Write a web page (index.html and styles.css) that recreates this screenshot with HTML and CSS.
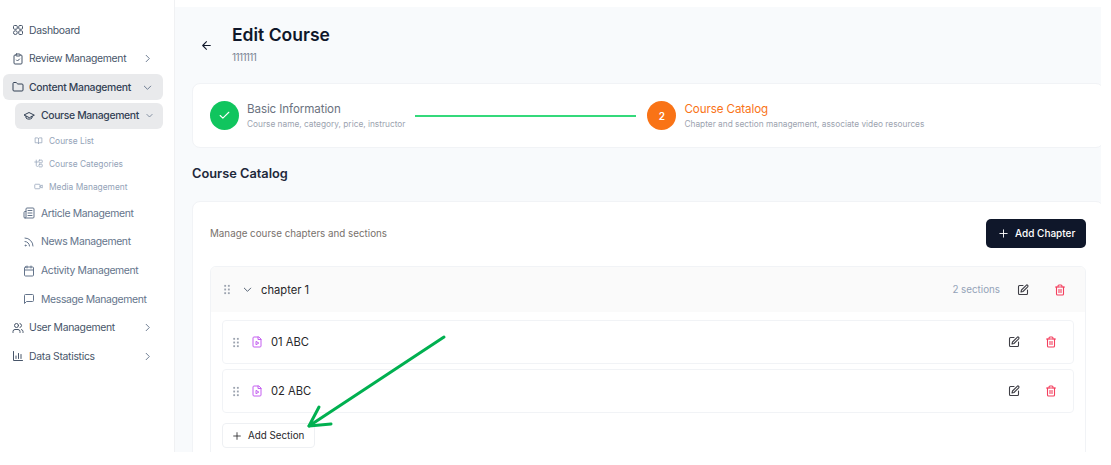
FILE: index.html
```html
<!DOCTYPE html>
<html lang="en">
<head>
<meta charset="utf-8">
<title>Edit Course</title>
<link rel="stylesheet" href="styles.css">
</head>
<body>
<svg width="0" height="0" class="defs">
  <symbol id="grip" viewBox="0 0 8 12"><g fill="currentColor"><rect x="1" y="1" width="2" height="2"/><rect x="5" y="1" width="2" height="2"/><rect x="1" y="5" width="2" height="2"/><rect x="5" y="5" width="2" height="2"/><rect x="1" y="9" width="2" height="2"/><rect x="5" y="9" width="2" height="2"/></g></symbol>
  <symbol id="edit" viewBox="0 0 24 24"><g fill="none" stroke="currentColor" stroke-width="2.2" stroke-linecap="round" stroke-linejoin="round"><path d="M12 3H5a2 2 0 0 0-2 2v14a2 2 0 0 0 2 2h14a2 2 0 0 0 2-2v-7"/><path d="M18.4 2.600a2.100 2.100 0 1 1 3 3L12 15l-4 1 1-4z"/></g></symbol>
  <symbol id="trash" viewBox="0 0 24 24"><g fill="none" stroke="currentColor" stroke-width="2.2" stroke-linecap="round" stroke-linejoin="round"><path d="M3 6h18"/><path d="M19 6v14a2 2 0 0 1-2 2H7a2 2 0 0 1-2-2V6"/><path d="M8 6V4a2 2 0 0 1 2-2h4a2 2 0 0 1 2 2v2"/><path d="M10 11v6"/><path d="M14 11v6"/></g></symbol>
  <symbol id="file" viewBox="0 0 24 24"><g fill="none" stroke="currentColor" stroke-width="2" stroke-linecap="round" stroke-linejoin="round"><path d="M15 2H6a2 2 0 0 0-2 2v16a2 2 0 0 0 2 2h12a2 2 0 0 0 2-2V7z"/><path d="M14 2v5h6"/><path d="M10 11.500v6l5-3z"/></g></symbol>
  <symbol id="right" viewBox="0 0 24 24"><path d="m9 5 7 7-7 7" fill="none" stroke="currentColor" stroke-width="2" stroke-linecap="round" stroke-linejoin="round"/></symbol>
  <symbol id="down" viewBox="0 0 24 24"><path d="m5 9 7 7 7-7" fill="none" stroke="currentColor" stroke-width="2" stroke-linecap="round" stroke-linejoin="round"/></symbol>
  <symbol id="plus" viewBox="0 0 24 24"><path d="M12 4v16M4 12h16" fill="none" stroke="currentColor" stroke-width="2" stroke-linecap="round"/></symbol>
</svg>
<div class="page">
  <aside class="sidebar">
    <div class="nav-item top">
      <svg class="ico" viewBox="0 0 24 24"><g fill="none" stroke="currentColor" stroke-width="2"><rect x="3" y="3" width="7.500" height="7.500" rx="2"/><rect x="13.500" y="3" width="7.500" height="7.500" rx="2"/><rect x="3" y="13.500" width="7.500" height="7.500" rx="3.700"/><rect x="13.500" y="13.500" width="7.500" height="7.500" rx="2"/></g></svg>
      <span class="label">Dashboard</span>
    </div>
    <div class="nav-item top">
      <svg class="ico" viewBox="0 0 24 24"><g fill="none" stroke="currentColor" stroke-width="2" stroke-linecap="round" stroke-linejoin="round"><rect x="8" y="2" width="8" height="4" rx="1"/><path d="M16 4h2a2 2 0 0 1 2 2v14a2 2 0 0 1-2 2H6a2 2 0 0 1-2-2V6a2 2 0 0 1 2-2h2"/><path d="m9 14 2 2 4-4"/></g></svg>
      <span class="label">Review Management</span>
      <svg class="chev"><use href="#right"/></svg>
    </div>
    <div class="nav-item top active">
      <svg class="ico" viewBox="0 0 24 24"><path d="M20 20a2 2 0 0 0 2-2V8a2 2 0 0 0-2-2h-7.900a2 2 0 0 1-1.700-.9l-.8-1.200A2 2 0 0 0 7.900 3H4a2 2 0 0 0-2 2v13a2 2 0 0 0 2 2z" fill="none" stroke="currentColor" stroke-width="2" stroke-linejoin="round"/></svg>
      <span class="label">Content Management</span>
      <svg class="chev"><use href="#down"/></svg>
    </div>
    <div class="nav-item sub active">
      <svg class="ico" viewBox="0 0 24 24"><g fill="none" stroke="currentColor" stroke-width="2" stroke-linecap="round" stroke-linejoin="round"><path d="M22 10 12 5 2 10l10 5z"/><path d="M6 12.500V16c3 3 9 3 12 0v-3.500"/></g></svg>
      <span class="label">Course Management</span>
      <svg class="chev small"><use href="#down"/></svg>
    </div>
    <div class="leaf">
      <svg class="leaf-ico" viewBox="0 0 24 24"><g fill="none" stroke="currentColor" stroke-width="2" stroke-linejoin="round"><path d="M12 6.500V21"/><path d="M3 5h6a3 3 0 0 1 3 2 3 3 0 0 1 3-2h6v13h-7a2 2 0 0 0-2 3 2 2 0 0 0-2-3H3z"/></g></svg>
      <span>Course List</span>
    </div>
    <div class="leaf">
      <svg class="leaf-ico" viewBox="0 0 24 24"><g fill="none" stroke="currentColor" stroke-width="2" stroke-linecap="round" stroke-linejoin="round"><path d="M2 8h8M6 3v14a3 3 0 0 0 3 3"/><rect x="13" y="3" width="9" height="7" rx="1.500"/><rect x="13" y="14" width="9" height="7" rx="1.500"/></g></svg>
      <span>Course Categories</span>
    </div>
    <div class="leaf">
      <svg class="leaf-ico" viewBox="0 0 24 24"><g fill="none" stroke="currentColor" stroke-width="2" stroke-linejoin="round"><rect x="2" y="6" width="14" height="12" rx="2"/><path d="m16 11 6-3v8l-6-3z"/></g></svg>
      <span>Media Management</span>
    </div>
    <div class="nav-item sub">
      <svg class="ico" viewBox="0 0 24 24"><g fill="none" stroke="currentColor" stroke-width="2" stroke-linecap="round" stroke-linejoin="round"><path d="M4 22h16a2 2 0 0 0 2-2V4a2 2 0 0 0-2-2H8a2 2 0 0 0-2 2v16a2 2 0 0 1-4 0V11a2 2 0 0 1 2-2h2"/><path d="M10 7h8M10 12h8M10 17h8"/></g></svg>
      <span class="label">Article Management</span>
    </div>
    <div class="nav-item sub">
      <svg class="ico" viewBox="0 0 24 24"><g fill="none" stroke="currentColor" stroke-width="2" stroke-linecap="round"><path d="M4 4a16 16 0 0 1 16 16"/><path d="M4 11a9 9 0 0 1 9 9"/><circle cx="5" cy="19" r="1"/></g></svg>
      <span class="label">News Management</span>
    </div>
    <div class="nav-item sub">
      <svg class="ico" viewBox="0 0 24 24"><g fill="none" stroke="currentColor" stroke-width="2" stroke-linecap="round"><rect x="3" y="4" width="18" height="18" rx="2"/><path d="M8 2v4M16 2v4M3 10h18"/></g></svg>
      <span class="label">Activity Management</span>
    </div>
    <div class="nav-item sub">
      <svg class="ico" viewBox="0 0 24 24"><path d="M21 15a2 2 0 0 1-2 2H7l-4 4V5a2 2 0 0 1 2-2h14a2 2 0 0 1 2 2z" fill="none" stroke="currentColor" stroke-width="2" stroke-linejoin="round"/></svg>
      <span class="label">Message Management</span>
    </div>
    <div class="nav-item top">
      <svg class="ico" viewBox="0 0 24 24"><g fill="none" stroke="currentColor" stroke-width="2" stroke-linecap="round"><path d="M16 21v-2a4 4 0 0 0-4-4H6a4 4 0 0 0-4 4v2"/><circle cx="9" cy="7" r="4"/><path d="M22 21v-2a4 4 0 0 0-3-3.900M16 3.100a4 4 0 0 1 0 7.800"/></g></svg>
      <span class="label">User Management</span>
      <svg class="chev"><use href="#right"/></svg>
    </div>
    <div class="nav-item top">
      <svg class="ico" viewBox="0 0 24 24"><g fill="none" stroke="currentColor" stroke-width="2" stroke-linecap="round"><path d="M3 3v18h18"/><path d="M8 17v-5M13 17V7M18 17v-8"/></g></svg>
      <span class="label">Data Statistics</span>
      <svg class="chev"><use href="#right"/></svg>
    </div>
  </aside>

  <main class="main">
    <header class="head">
      <svg class="back" viewBox="0 0 24 24"><path d="M19 12H5M12 19l-7-7 7-7" fill="none" stroke="currentColor" stroke-width="2" stroke-linecap="round" stroke-linejoin="round"/></svg>
      <div>
        <h1 class="title">Edit Course</h1>
        <p class="subtitle">1111111</p>
      </div>
    </header>

    <section class="steps">
      <div class="step">
        <span class="dot done"><svg class="check" viewBox="0 0 24 24"><path d="M20 6 9 17l-5-5" fill="none" stroke="currentColor" stroke-width="2" stroke-linecap="round" stroke-linejoin="round"/></svg></span>
        <div>
          <div class="step-name">Basic Information</div>
          <div class="step-desc">Course name, category, price, instructor</div>
        </div>
      </div>
      <span class="line"></span>
      <div class="step">
        <span class="dot current">2</span>
        <div>
          <div class="step-name now">Course Catalog</div>
          <div class="step-desc">Chapter and section management, associate video resources</div>
        </div>
      </div>
    </section>

    <h2 class="section-title">Course Catalog</h2>

    <section class="catalog">
      <div class="catalog-top">
        <span class="hint">Manage course chapters and sections</span>
        <button class="btn-dark"><svg class="plus"><use href="#plus"/></svg>Add Chapter</button>
      </div>
      <div class="chapter">
        <div class="chapter-head">
          <svg class="grip"><use href="#grip"/></svg>
          <svg class="chapter-chev"><use href="#down"/></svg>
          <span class="chapter-name">chapter 1</span>
          <span class="count">2 sections</span>
          <svg class="act edit"><use href="#edit"/></svg>
          <svg class="act trash"><use href="#trash"/></svg>
        </div>
        <div class="chapter-body">
          <div class="lesson">
            <svg class="grip"><use href="#grip"/></svg>
            <svg class="file"><use href="#file"/></svg>
            <span class="lesson-name">01 ABC</span>
            <svg class="act edit"><use href="#edit"/></svg>
            <svg class="act trash"><use href="#trash"/></svg>
          </div>
          <div class="lesson">
            <svg class="grip"><use href="#grip"/></svg>
            <svg class="file"><use href="#file"/></svg>
            <span class="lesson-name">02 ABC</span>
            <svg class="act edit"><use href="#edit"/></svg>
            <svg class="act trash"><use href="#trash"/></svg>
          </div>
          <button class="btn-light"><svg class="plus"><use href="#plus"/></svg>Add Section</button>
        </div>
      </div>
    </section>
  </main>

  <svg class="arrow" viewBox="0 0 1111 465"><g fill="none" stroke="#00b050" stroke-width="3" stroke-linecap="round" stroke-linejoin="round"><path d="M444 337 309 426"/><path d="M319 407 309 426 331 424"/></g></svg>
</div>
</body>
</html>
```
FILE: styles.css
```css
* { box-sizing: border-box; }
html, body { margin: 0; padding: 0; background: #fff; }
body { font-family: "Inter", "Liberation Sans", sans-serif; color: #0f172a; height: 465px; overflow: hidden; }
.defs { position: absolute; }
.page { position: relative; display: flex; width: 1101px; height: 452px; padding-top: 7px; overflow: hidden; }

.sidebar { flex: 0 0 175px; width: 175px; min-width: 0; padding: 17px 11px 0 3px; margin-top: -7px; border-right: 1px solid #f0f1f3; background: #fff; display: flex; flex-direction: column; gap: 2.600px; }
.nav-item { display: flex; align-items: center; height: 26px; flex: none; border-radius: 6px; color: #475569; font-size: 10.400px; letter-spacing: -0.300px; padding-right: 10px; }
.nav-item.top { padding-left: 9px; gap: 5px; }
.nav-item.sub { margin-left: 12px; padding-left: 8px; gap: 6px; color: #64748b; letter-spacing: -0.350px; }
.nav-item.active { background: #e9eaec; color: #334155; font-weight: 500; }
.label { flex: 1; white-space: nowrap; }
.ico { width: 12px; height: 12px; flex: none; }
.chev { width: 11px; height: 11px; flex: none; color: #64748b; }
.chev.small { width: 9px; height: 9px; }
.leaf { display: flex; align-items: center; height: 20.400px; padding-bottom: 2px; flex: none; margin-left: 31px; gap: 6px; font-size: 8.400px; color: #94a3b8; }
.leaf-ico { width: 9px; height: 9px; flex: none; }

.main { flex: none; width: 929px; padding: 0 0 0 17px; background: #f8fafc; overflow: hidden; }
.head { display: flex; align-items: flex-start; padding: 17px 0 0 8px; height: 76px; gap: 19px; }
.back { width: 13px; height: 13px; margin-top: 15px; color: #0f172a; flex: none; }
.title { margin: 0; font-size: 17.500px; line-height: 22px; font-weight: 600; color: #0f172a; }
.subtitle { margin: 5px 0 0; font-size: 10px; line-height: 13px; color: #7b8494; letter-spacing: -0.600px; }

.steps { display: flex; align-items: center; width: 912px; height: 65px; padding: 0 17px; background: #fff; border: 1px solid #f1f3f6; border-radius: 8px; }
.step { display: flex; align-items: center; gap: 8px; flex: none; }
.dot { display: flex; align-items: center; justify-content: center; width: 29px; height: 29px; border-radius: 50%; color: #fff; font-size: 10px; font-weight: 600; flex: none; }
.dot.done { background: #10c55e; }
.dot.current { background: #f97316; }
.check { width: 13px; height: 13px; }
.step-name { font-size: 11.600px; line-height: 15px; color: #6b7280; letter-spacing: -0.100px; white-space: nowrap; }
.step-name.now { color: #f97316; }
.step-desc { font-size: 8.300px; line-height: 11px; margin-top: 2px; color: #9ca3af; white-space: nowrap; }
.line { display: block; width: 221px; height: 2px; background: #34d97b; margin: 0 11px 0 10px; flex: none; }

.section-title { margin: 0; height: 55px; padding-top: 17px; font-size: 12.800px; line-height: 18px; font-weight: 600; color: #1e293b; }

.catalog { width: 912px; height: 260px; padding: 16px 17px 0; background: #fff; border: 1px solid #f1f3f6; border-radius: 8px 8px 0 0; margin-top: -2px; }
.catalog-top { display: flex; align-items: center; justify-content: space-between; height: 30px; margin-bottom: 18px; width: 876px; }
.hint { font-size: 9.800px; color: #78716c; }
.btn-dark { display: flex; align-items: center; gap: 6px; height: 29px; width: 100px; padding: 0 12px; border: 0; border-radius: 5px; background: #0f172a; color: #fff; font: 500 10px "Inter", sans-serif; white-space: nowrap; }
.plus { width: 11px; height: 11px; flex: none; }

.chapter { width: 876px; height: 210px; border: 1px solid #f1f3f6; border-radius: 6px 6px 0 0; overflow: hidden; }
.chapter-head { display: flex; align-items: center; height: 45px; padding: 0 19px 0 12px; background: #fafafa; }
.grip { width: 8px; height: 11px; color: #9ca3af; flex: none; }
.chapter-chev { width: 11px; height: 11px; margin-left: 11px; color: #475569; flex: none; }
.chapter-name { flex: 1; margin-left: 8px; font-size: 11.200px; color: #27272a; }
.count { margin-right: 17px; font-size: 9.800px; color: #94a3b8; }
.act { width: 12px; height: 12px; flex: none; }
.act.edit { color: #3f3f46; }
.act.trash { color: #f43f5e; margin-left: 25px; }
.chapter-body { padding: 8px 11px 0; }
.lesson { display: flex; align-items: center; height: 44px; margin-bottom: 5px; padding: 0 16px 0 9px; background: #fff; border: 1px solid #f1f3f6; border-radius: 4px; }
.file { width: 12px; height: 12px; margin-left: 11px; color: #c45ff0; flex: none; }
.lesson-name { flex: 1; margin-left: 8px; font-size: 11.200px; color: #27272a; }
.btn-light { display: flex; align-items: center; gap: 6px; width: 93px; height: 25px; margin-top: 10px; padding: 0 9px; background: #fff; border: 1px solid #eef0f3; border-radius: 4px; color: #27272a; font: 400 9.800px "Inter", sans-serif; white-space: nowrap; }
.btn-light .plus { width: 10px; height: 10px; }

.arrow { position: absolute; left: 0; top: 0; width: 1111px; height: 465px; pointer-events: none; }
```
